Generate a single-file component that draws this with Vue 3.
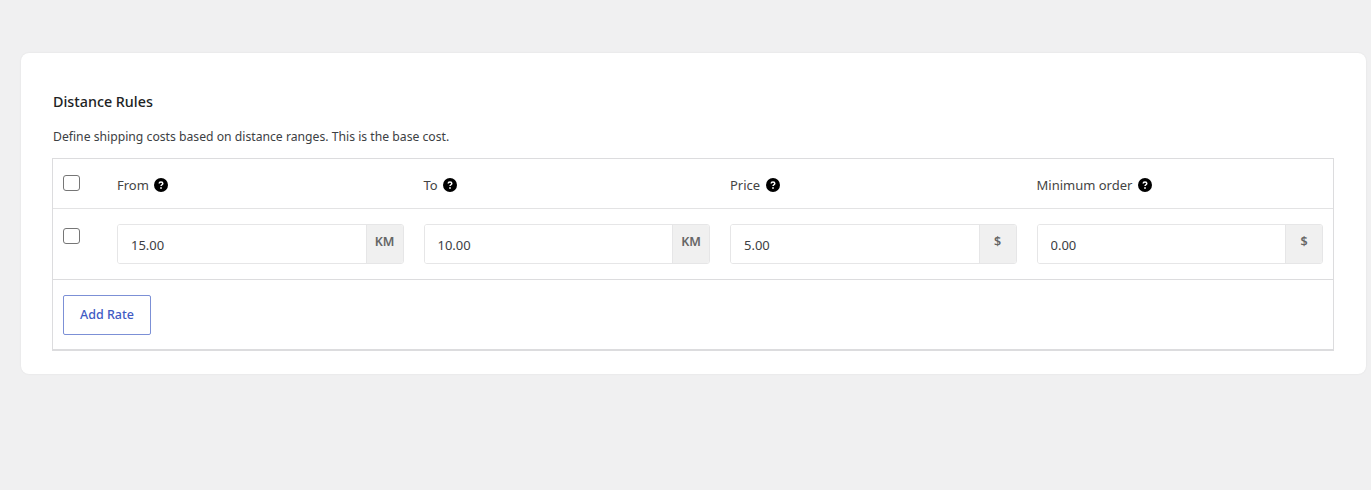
<script setup lang="ts">
interface Column {
  label: string
  value: string
  unit: string
}

const columns: Column[] = [
  { label: 'From', value: '15.00', unit: 'KM' },
  { label: 'To', value: '10.00', unit: 'KM' },
  { label: 'Price', value: '5.00', unit: '$' },
  { label: 'Minimum order', value: '0.00', unit: '$' }
]
</script>

<template>
  <div class="page">
    <section class="card">
      <h3 class="title">Distance Rules</h3>
      <p class="desc">Define shipping costs based on distance ranges. This is the base cost.</p>
      <table class="rules">
        <thead>
          <tr>
            <th class="check-cell"><input type="checkbox" class="check" /></th>
            <th v-for="col in columns" :key="col.label">
              <span class="head-label">
                {{ col.label }}
                <svg class="help" width="14" height="14" viewBox="0 0 14 14">
                  <circle cx="7" cy="7" r="7" fill="#000" />
                  <path d="M5.2 5.6c0-1 .8-1.6 1.8-1.6s1.8.6 1.8 1.5c0 1.3-1.8 1.2-1.8 2.6" fill="none" stroke="#fff" stroke-width="1.5" />
                  <rect x="6.2" y="9.2" width="1.6" height="1.6" fill="#fff" />
                </svg>
              </span>
            </th>
          </tr>
        </thead>
        <tbody>
          <tr>
            <td class="check-cell"><input type="checkbox" class="check row-check" /></td>
            <td v-for="col in columns" :key="col.label">
              <div class="field">
                <input class="field-input" type="text" :value="col.value" />
                <span class="unit">{{ col.unit }}</span>
              </div>
            </td>
          </tr>
        </tbody>
        <tfoot>
          <tr>
            <td colspan="5" class="foot">
              <button type="button" class="add-btn">Add Rate</button>
            </td>
          </tr>
        </tfoot>
      </table>
    </section>
  </div>
</template>

<style>
html,
body {
  background: #f0f0f1;
}
</style>

<style scoped>
.page {
  height: 490px;
  box-sizing: border-box;
  padding: 53px 5px 0 21px;
  background: #f0f0f1;
  font-family: 'Noto Sans', 'Open Sans', sans-serif;
  color: #202223;
}

.card {
  box-sizing: border-box;
  height: 321px;
  padding: 39px 32px 0 31px;
  background: #fff;
  border-radius: 8px;
  box-shadow: 0 0 2px rgba(0, 0, 0, 0.08);
}

.title {
  margin: 0 0 0 1px;
  font-size: 14.3px;
  line-height: 20px;
  font-weight: 500;
}

.desc {
  margin: 15px 0 0 1px;
  font-size: 12.2px;
  line-height: 20px;
  color: #3c4043;
}

.rules {
  width: 100%;
  margin-top: 11px;
  table-layout: fixed;
  border-collapse: separate;
  border-spacing: 0;
  border: 1px solid #dcdcde;
  border-bottom-width: 2px;
}

th,
td {
  box-sizing: border-box;
  padding: 0 10px;
  text-align: left;
  vertical-align: top;
  font-weight: 400;
}

th {
  height: 50px;
  vertical-align: middle;
  border-bottom: 1px solid #e3e3e4;
}

tbody td {
  height: 71px;
  padding-top: 15px;
  border-bottom: 1px solid #dcdcde;
}

.check-cell {
  width: 54px;
}

th.check-cell {
  padding-bottom: 2px;
}

.check {
  display: block;
  width: 17px;
  height: 16px;
  margin: 0;
  appearance: none;
  background: #fff;
  border: 1px solid #767676;
  border-radius: 3px;
}

.row-check {
  margin-top: 4px;
}

.head-label {
  display: inline-flex;
  align-items: center;
  gap: 5.5px;
  font-size: 13px;
  color: #444;
}

.help {
  flex-shrink: 0;
}

.field {
  display: flex;
  height: 40px;
  box-sizing: border-box;
  border: 1px solid #e6e6e7;
  border-radius: 3px;
  overflow: hidden;
}

.field-input {
  flex: 1;
  min-width: 0;
  padding: 1px 13px 0;
  border: 0;
  outline: 0;
  font: inherit;
  font-size: 13px;
  color: #3c4043;
  background: #fff;
}

.unit {
  width: 37px;
  padding-top: 8px;
  box-sizing: border-box;
  text-align: center;
  font-size: 12.5px;
  line-height: 17px;
  font-weight: 600;
  color: #666;
  background: #f0f0f0;
  border-left: 1px solid #e6e6e7;
}

.foot {
  height: 69px;
  padding-top: 15px;
}

.add-btn {
  display: block;
  width: 88px;
  height: 40px;
  padding: 0 0 2px;
  font: inherit;
  font-size: 12.5px;
  font-weight: 500;
  color: #3f5bc4;
  background: #fff;
  border: 1px solid #7c90d6;
  border-radius: 2px;
  cursor: pointer;
}
</style>
